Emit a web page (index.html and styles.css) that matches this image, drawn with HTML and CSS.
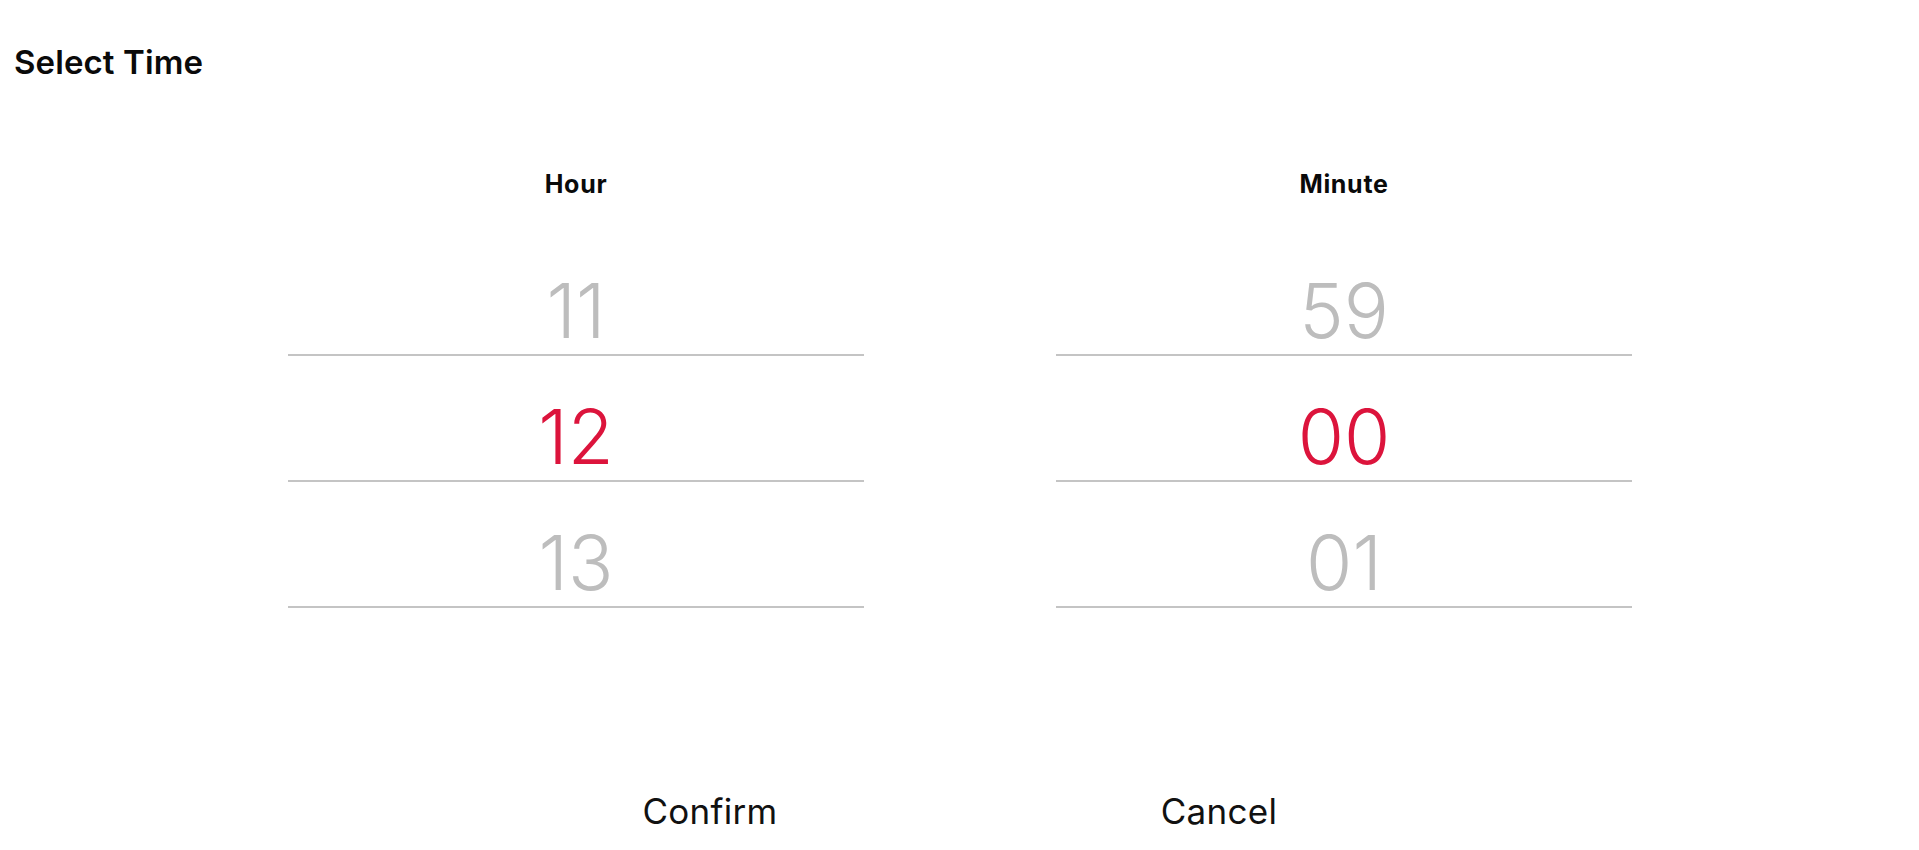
FILE: index.html
```html
<!DOCTYPE html>
<html lang="en">
<head>
<meta charset="utf-8">
<title>Select Time</title>
<link rel="stylesheet" href="styles.css">
</head>
<body>
<div class="page">
  <h1 class="title">Select Time</h1>
  <div class="pickers">
    <div class="column">
      <div class="label">Hour</div>
      <div class="wheel">
        <div class="item">11</div>
        <div class="item selected">12</div>
        <div class="item">13</div>
      </div>
    </div>
    <div class="column">
      <div class="label">Minute</div>
      <div class="wheel">
        <div class="item">59</div>
        <div class="item selected">00</div>
        <div class="item">01</div>
      </div>
    </div>
  </div>
  <div class="actions">
    <button class="btn">Confirm</button>
    <button class="btn">Cancel</button>
  </div>
</div>
</body>
</html>
```

FILE: styles.css
```css
html, body {
  margin: 0;
  padding: 0;
  background: #ffffff;
}

body {
  font-family: Inter, "Noto Sans", "Liberation Sans", sans-serif;
  color: #111111;
}

.page {
  display: flex;
  flex-direction: column;
  height: 850px;
}

.title {
  margin: 0;
  padding: 44px 0 0 14px;
  font-size: 33px;
  font-weight: 600;
  line-height: 36px;
  letter-spacing: 0.1px;
  color: #0a0a0a;
}

.pickers {
  display: flex;
  justify-content: center;
  gap: 192px;
  margin-top: 90px;
  padding-left: 1px;
}

.column {
  width: 576px;
  display: flex;
  flex-direction: column;
  align-items: stretch;
}

.label {
  text-align: center;
  font-size: 25px;
  font-weight: 700;
  line-height: 28px;
  height: 28px;
  margin-bottom: 32px;
  letter-spacing: 0.7px;
  color: #0a0a0a;
}

.wheel {
  display: flex;
  flex-direction: column;
}

.item {
  box-sizing: content-box;
  height: 88px;
  padding-top: 36px;
  border-bottom: 2px solid #c4c4c4;
  display: flex;
  align-items: center;
  justify-content: center;
  font-size: 75px;
  font-weight: 300;
  color: #bdbdbd;
  line-height: 1;
}

.item.selected {
  color: #dc143c;
}

.actions {
  display: flex;
  justify-content: center;
  gap: 209px;
  margin-top: 183px;
  padding-left: 10px;
}

.btn {
  width: 300px;
  background: none;
  border: none;
  padding: 0;
  font-family: Inter, "Noto Sans", "Liberation Sans", sans-serif;
  font-size: 35px;
  font-weight: 400;
  color: #111111;
  line-height: 40px;
  letter-spacing: 0.3px;
  cursor: pointer;
}
```
